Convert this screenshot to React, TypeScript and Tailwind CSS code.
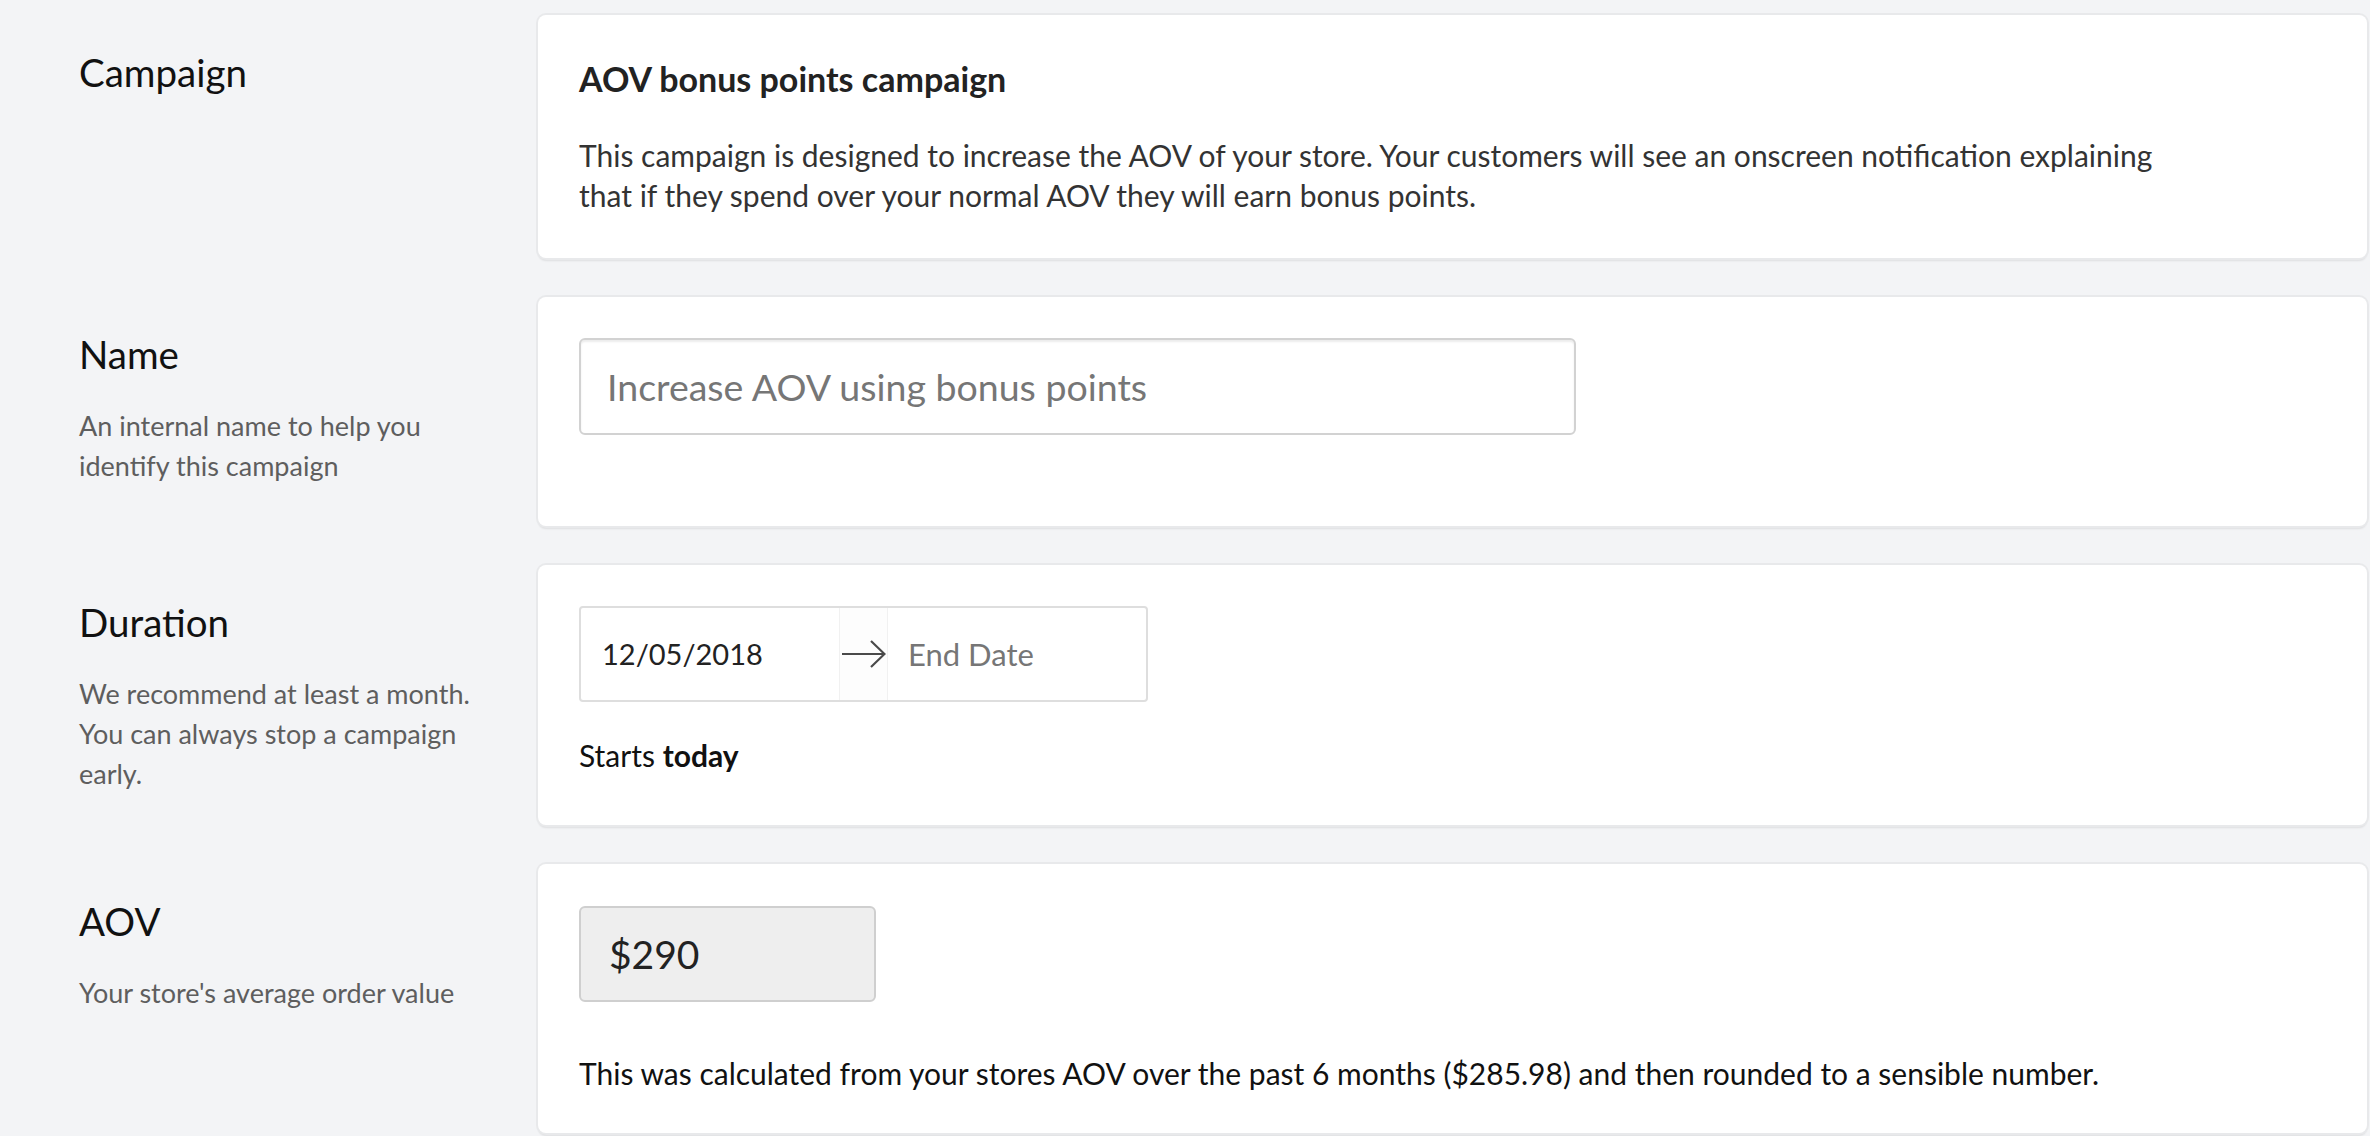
import React from "react";

function Section({
  label,
  hint,
  children,
  className = "",
}: {
  label: string;
  hint?: React.ReactNode;
  children: React.ReactNode;
  className?: string;
}) {
  return (
    <div className="flex">
      <div className="w-[538px] shrink-0 pl-[79px] pr-[52px] pt-[33px]">
        <div className="text-[38.5px] leading-[48px] text-[#111]">{label}</div>
        {hint && (
          <div className="mt-[28px] text-[27px] leading-[40px] text-[#5e5e5e]">{hint}</div>
        )}
      </div>
      <div
        className={
          "mr-[3px] flex-1 rounded-[8px] bg-white px-[41px] shadow-[0_0_0_2px_#e8e9eb,0_3px_2px_rgba(0,0,0,0.09)] " +
          className
        }
      >
        {children}
      </div>
    </div>
  );
}

function ArrowRight() {
  return (
    <svg width="44" height="28" viewBox="0 0 44 28" fill="none" stroke="#4a4a4a" strokeWidth="2.2">
      <path d="M0 14H42.5" />
      <path d="M29 1L42.5 14L29 27" />
    </svg>
  );
}

export default function App() {
  return (
    <div className="relative h-[1136px] overflow-hidden bg-[#f3f4f6] font-[Lato,sans-serif]">
      <div className="flex flex-col gap-[39px] pt-[15px]">
        <Section label="Campaign" className="pt-[43px] pb-[43px]">
          <div className="text-[34px] font-bold leading-[41px] text-[#222]">AOV bonus points campaign</div>
          <p className="mt-[36px] max-w-[1610px] text-[30px] leading-[40px] text-[#333]">
            This campaign is designed to increase the AOV of your store. Your customers will see an onscreen
            notification explaining that if they spend over your normal AOV they will earn bonus points.
          </p>
        </Section>

        <Section
          label="Name"
          hint="An internal name to help you identify this campaign"
          className="pt-[41px] pb-[91px]"
        >
          <input
            placeholder="Increase AOV using bonus points"
            className="h-[97px] w-[997px] rounded-[6px] border-2 border-[#d2d2d2] bg-white px-[26px] text-[37.5px] text-[#222] shadow-[inset_0_2px_2px_rgba(0,0,0,0.08)] outline-none placeholder:text-[#767676]"
          />
        </Section>

        <Section
          label="Duration"
          hint="We recommend at least a month. You can always stop a campaign early."
          className="pt-[41px] pb-[50px]"
        >
          <div className="flex h-[96px] w-[569px] rounded-[4px] border-2 border-[#dedede]">
            <div className="flex w-[258px] items-center pl-[21px] text-[29px] text-[#222]">12/05/2018</div>
            <div className="flex w-[49px] items-center justify-center border-x border-[#f1f1f1] bg-[#fdfdfd]">
              <ArrowRight />
            </div>
            <div className="flex flex-1 items-center pl-[20px] text-[31px] text-[#767676]">End Date</div>
          </div>
          <div className="mt-[33px] text-[30px] leading-[40px] text-[#111]">
            Starts <span className="font-bold">today</span>
          </div>
        </Section>

        <Section label="AOV" hint="Your store's average order value" className="pt-[42px] pb-[40px]">
          <div className="flex h-[96px] w-[297px] items-center rounded-[6px] border-2 border-[#cfcfcf] bg-[#eeeeee] pl-[28px] text-[39px] text-[#222]">
            $290
          </div>
          <p className="mt-[51px] text-[30px] leading-[40px] text-[#111]">
            This was calculated from your stores AOV over the past 6 months ($285.98) and then rounded to a
            sensible number.
          </p>
        </Section>
      </div>
    </div>
  );
}
